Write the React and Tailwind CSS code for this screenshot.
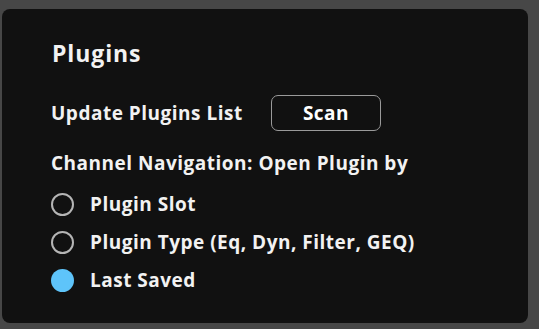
import { useState } from 'react'

const OPTIONS = [
  { id: 'slot', label: 'Plugin Slot' },
  { id: 'type', label: 'Plugin Type (Eq, Dyn, Filter, GEQ)' },
  { id: 'last', label: 'Last Saved' },
]

function Radio({ checked }) {
  return checked ? (
    <span className="block w-[23px] h-[23px] rounded-full bg-[#5ec4fa] shrink-0" />
  ) : (
    <span className="block w-[23px] h-[23px] rounded-full border-2 border-[#b5b5b5] shrink-0" />
  )
}

export default function App() {
  const [openBy, setOpenBy] = useState('last')

  return (
    <div className="w-[539px] h-[329px] bg-[#474747] pl-[2px] pt-[9px] pr-[11px] pb-[6px] font-['Open_Sans',sans-serif] text-[#f2f2f2]">
      <div className="h-full bg-[#111111] rounded-[8px] pl-[49px] pt-[30px]">
        <h1 className="text-[23px] leading-[28px] font-bold tracking-[0.9px] ml-[1px]">Plugins</h1>

        {/* Update plugins */}
        <div className="flex items-center mt-[28px]">
          <span className="text-[19px] leading-[26px] font-bold tracking-[0.5px] w-[220px]">Update Plugins List</span>
          <button className="w-[110px] h-[36px] rounded-[7px] border-[1.5px] border-[#9a9a9a] text-[19px] font-bold tracking-[0.5px] text-white">
            Scan
          </button>
        </div>

        <p className="text-[19px] leading-[26px] font-bold tracking-[0.5px] mt-[19px]">Channel Navigation: Open Plugin by</p>

        {/* Open plugin options */}
        <div className="flex flex-col gap-[12px] mt-[15px]">
          {OPTIONS.map(o => (
            <label key={o.id} className="flex items-center gap-[16px] cursor-pointer" onClick={() => setOpenBy(o.id)}>
              <Radio checked={openBy === o.id} />
              <span className="text-[19px] leading-[26px] font-bold tracking-[0.5px]">{o.label}</span>
            </label>
          ))}
        </div>
      </div>
    </div>
  )
}
